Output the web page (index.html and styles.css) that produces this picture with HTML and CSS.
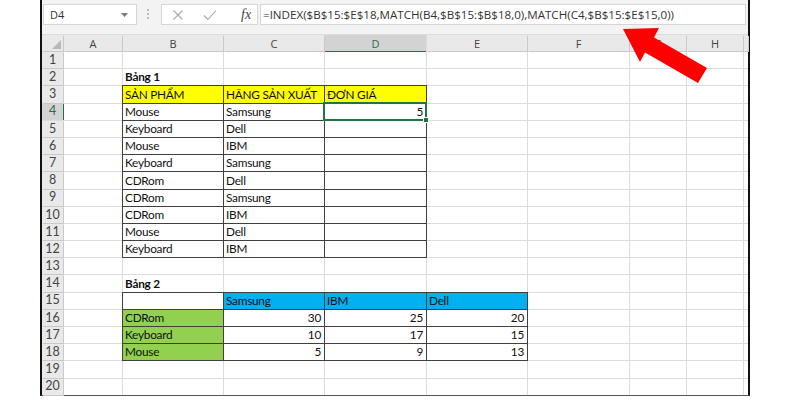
FILE: index.html
```html
<!DOCTYPE html>
<html lang="vi">
<head>
<meta charset="utf-8">
<title>Excel INDEX MATCH</title>
<link rel="stylesheet" href="styles.css">
</head>
<body>
<div class="frame">
  <div class="toolbar">
    <div class="namebox"><span>D4</span><svg class="dd" width="7" height="4" viewBox="0 0 7 4"><path d="M0 0H7L3.5 4Z" fill="#7a7a7a"/></svg></div>
    <div class="grip"><svg width="24" height="21" viewBox="0 0 24 21"><circle cx="11" cy="6" r="1" fill="#a8a8a8"/><circle cx="11" cy="10" r="1" fill="#a8a8a8"/><circle cx="11" cy="14" r="1" fill="#a8a8a8"/></svg></div>
    <div class="fxbox">
      <svg class="ic" width="12" height="12" viewBox="0 0 12 12"><path d="M1.5 1.5L10.5 10.5M10.5 1.5L1.5 10.5" stroke="#a9a9a9" stroke-width="1.1" fill="none"/></svg>
      <svg class="ic" width="14" height="12" viewBox="0 0 14 12"><path d="M1 6.5L5 10.5L13 1.5" stroke="#a9a9a9" stroke-width="1.1" fill="none"/></svg>
      <span class="fx">fx</span>
    </div>
    <div class="formula">=INDEX($B$15:$E$18,MATCH(B4,$B$15:$B$18,0),MATCH(C4,$B$15:$E$15,0))</div>
  </div>
  <div class="sheet">
    <div class="corner"></div><div class="ch">A</div><div class="ch">B</div><div class="ch">C</div><div class="ch chs">D</div><div class="ch">E</div><div class="ch">F</div><div class="ch">G</div><div class="ch">H</div><div class="ch"></div>

    <div class="rh">1</div><div class="c"></div><div class="c"></div><div class="c"></div><div class="c"></div><div class="c"></div><div class="c"></div><div class="c"></div><div class="c"></div><div class="c"></div>
    <div class="rh">2</div><div class="c"></div><div class="c b">Bảng 1</div><div class="c"></div><div class="c"></div><div class="c"></div><div class="c"></div><div class="c"></div><div class="c"></div><div class="c"></div>
    <div class="rh">3</div><div class="c"></div><div class="c t y">SẢN PHẨM</div><div class="c t y">HÃNG SẢN XUẤT</div><div class="c t y">ĐƠN GIÁ</div><div class="c"></div><div class="c"></div><div class="c"></div><div class="c"></div><div class="c"></div>
    <div class="rh rhs">4</div><div class="c"></div><div class="c t">Mouse</div><div class="c t">Samsung</div><div class="c t n sel">5</div><div class="c"></div><div class="c"></div><div class="c"></div><div class="c"></div><div class="c"></div>
    <div class="rh">5</div><div class="c"></div><div class="c t">Keyboard</div><div class="c t">Dell</div><div class="c t"></div><div class="c"></div><div class="c"></div><div class="c"></div><div class="c"></div><div class="c"></div>
    <div class="rh">6</div><div class="c"></div><div class="c t">Mouse</div><div class="c t">IBM</div><div class="c t"></div><div class="c"></div><div class="c"></div><div class="c"></div><div class="c"></div><div class="c"></div>
    <div class="rh">7</div><div class="c"></div><div class="c t">Keyboard</div><div class="c t">Samsung</div><div class="c t"></div><div class="c"></div><div class="c"></div><div class="c"></div><div class="c"></div><div class="c"></div>
    <div class="rh">8</div><div class="c"></div><div class="c t">CDRom</div><div class="c t">Dell</div><div class="c t"></div><div class="c"></div><div class="c"></div><div class="c"></div><div class="c"></div><div class="c"></div>
    <div class="rh">9</div><div class="c"></div><div class="c t">CDRom</div><div class="c t">Samsung</div><div class="c t"></div><div class="c"></div><div class="c"></div><div class="c"></div><div class="c"></div><div class="c"></div>
    <div class="rh">10</div><div class="c"></div><div class="c t">CDRom</div><div class="c t">IBM</div><div class="c t"></div><div class="c"></div><div class="c"></div><div class="c"></div><div class="c"></div><div class="c"></div>
    <div class="rh">11</div><div class="c"></div><div class="c t">Mouse</div><div class="c t">Dell</div><div class="c t"></div><div class="c"></div><div class="c"></div><div class="c"></div><div class="c"></div><div class="c"></div>
    <div class="rh">12</div><div class="c"></div><div class="c t">Keyboard</div><div class="c t">IBM</div><div class="c t"></div><div class="c"></div><div class="c"></div><div class="c"></div><div class="c"></div><div class="c"></div>
    <div class="rh">13</div><div class="c"></div><div class="c"></div><div class="c"></div><div class="c"></div><div class="c"></div><div class="c"></div><div class="c"></div><div class="c"></div><div class="c"></div>
    <div class="rh">14</div><div class="c"></div><div class="c b">Bảng 2</div><div class="c"></div><div class="c"></div><div class="c"></div><div class="c"></div><div class="c"></div><div class="c"></div><div class="c"></div>
    <div class="rh">15</div><div class="c"></div><div class="c t"></div><div class="c t bl">Samsung</div><div class="c t bl">IBM</div><div class="c t bl">Dell</div><div class="c"></div><div class="c"></div><div class="c"></div><div class="c"></div>
    <div class="rh">16</div><div class="c"></div><div class="c t g">CDRom</div><div class="c t n">30</div><div class="c t n">25</div><div class="c t n">20</div><div class="c"></div><div class="c"></div><div class="c"></div><div class="c"></div>
    <div class="rh">17</div><div class="c"></div><div class="c t g">Keyboard</div><div class="c t n">10</div><div class="c t n">17</div><div class="c t n">15</div><div class="c"></div><div class="c"></div><div class="c"></div><div class="c"></div>
    <div class="rh">18</div><div class="c"></div><div class="c t g">Mouse</div><div class="c t n">5</div><div class="c t n">9</div><div class="c t n">13</div><div class="c"></div><div class="c"></div><div class="c"></div><div class="c"></div>
    <div class="rh">19</div><div class="c"></div><div class="c"></div><div class="c"></div><div class="c"></div><div class="c"></div><div class="c"></div><div class="c"></div><div class="c"></div><div class="c"></div>
    <div class="rh">20</div><div class="c"></div><div class="c"></div><div class="c"></div><div class="c"></div><div class="c"></div><div class="c"></div><div class="c"></div><div class="c"></div><div class="c"></div>
  </div>
</div>
<svg class="arrow" width="800" height="400" viewBox="0 0 800 400"><polygon points="623,29 659,28 654,37.4 707,68 698,83 645,52.6 640,62" fill="#ff0000"/></svg>
</body>
</html>
```

FILE: styles.css
```css
html, body {
  margin: 0;
  padding: 0;
  background: #ffffff;
}

body {
  font-family: "Lato", "Liberation Sans", sans-serif;
  color: #111;
  position: relative;
  width: 800px;
  height: 400px;
  overflow: hidden;
}

.frame {
  margin-left: 40px;
  width: 706px;
  border-left: 2px solid #111;
  border-right: 2px solid #111;
  border-bottom: 1px solid #555;
}

.toolbar {
  height: 35px;
  box-sizing: border-box;
  background: #f3f3f3;
  border-bottom: 1px solid #dcdcdc;
  display: flex;
  align-items: flex-start;
  padding: 4px 2px 0 1px;
}

.namebox {
  width: 94px;
  height: 21px;
  box-sizing: border-box;
  background: #fff;
  border: 1px solid #d6d6d6;
  display: flex;
  align-items: center;
  justify-content: space-between;
  padding: 0 8px 0 6px;
  font-family: "Open Sans", sans-serif;
  font-size: 11px;
  color: #333;
}

.grip {
  width: 24px;
  height: 21px;
}

.fxbox {
  width: 97px;
  height: 21px;
  box-sizing: border-box;
  background: #fff;
  border: 1px solid #d6d6d6;
  display: flex;
  align-items: center;
  padding-left: 10px;
  gap: 19px;
}

.fx {
  font-family: "Liberation Serif", serif;
  font-style: italic;
  font-size: 14px;
  color: #444;
  margin-left: 5px;
  line-height: 1;
}

.formula {
  flex: 1;
  height: 21px;
  box-sizing: border-box;
  margin-left: 2px;
  background: #fff;
  border: 1px solid #d6d6d6;
  font-family: "Open Sans", sans-serif;
  font-size: 11.6px;
  color: #333;
  line-height: 19px;
  padding-left: 2px;
  white-space: nowrap;
  overflow: hidden;
}

.sheet {
  display: grid;
  grid-template-columns: 21px 58px 100px 100px 101px 100px 101px 56px 56px 4px;
  grid-template-rows: 16px repeat(20, 16.2px);
  gap: 1px;
  background: #dcdcdc;
}

.corner, .ch, .rh {
  background: #e9e9e9;
  box-shadow: 1px 1px 0 #c9c9c9;
  color: #444;
}

.corner {
  position: relative;
}

.corner::after {
  content: "";
  position: absolute;
  right: 2px;
  bottom: 2px;
  border-style: solid;
  border-width: 0 0 9px 9px;
  border-color: transparent transparent #b9b9b9 transparent;
}

.ch {
  font-family: "Open Sans", sans-serif;
  font-size: 11px;
  display: flex;
  align-items: center;
  justify-content: center;
  line-height: 1;
}

.chs {
  background: #d3d3d3;
  color: #2b6b47;
  box-shadow: 0 2px 0 #217346;
}

.rh {
  font-size: 12.5px;
  display: flex;
  align-items: center;
  justify-content: center;
  line-height: 1;
}

.rhs {
  background: #d3d3d3;
  color: #2b6b47;
  box-shadow: 2px 0 0 #217346;
}

.c {
  background: #fff;
  font-size: 11.8px;
  letter-spacing: -0.25px;
  line-height: 14px;
  display: flex;
  align-items: flex-end;
  padding: 0 2px 1px 2px;
  white-space: nowrap;
  min-width: 0;
  box-sizing: border-box;
}

.b {
  font-weight: 700;
}

.t {
  outline: 1px solid #404040;
}

.y {
  background: #ffff00;
}

.bl {
  background: #00b0f0;
}

.g {
  background: #92d050;
}

.n {
  justify-content: flex-end;
  padding-right: 3px;
}

.sel {
  position: relative;
}

.sel::after {
  content: "";
  position: absolute;
  left: -2px;
  top: -2px;
  right: -1px;
  bottom: -1px;
  border: 2px solid #217346;
  z-index: 2;
}

.sel::before {
  content: "";
  position: absolute;
  right: -3px;
  bottom: -3px;
  width: 4px;
  height: 4px;
  background: #217346;
  border: 1px solid #fff;
  z-index: 3;
}

.arrow {
  position: absolute;
  left: 0;
  top: 0;
  pointer-events: none;
}
```
